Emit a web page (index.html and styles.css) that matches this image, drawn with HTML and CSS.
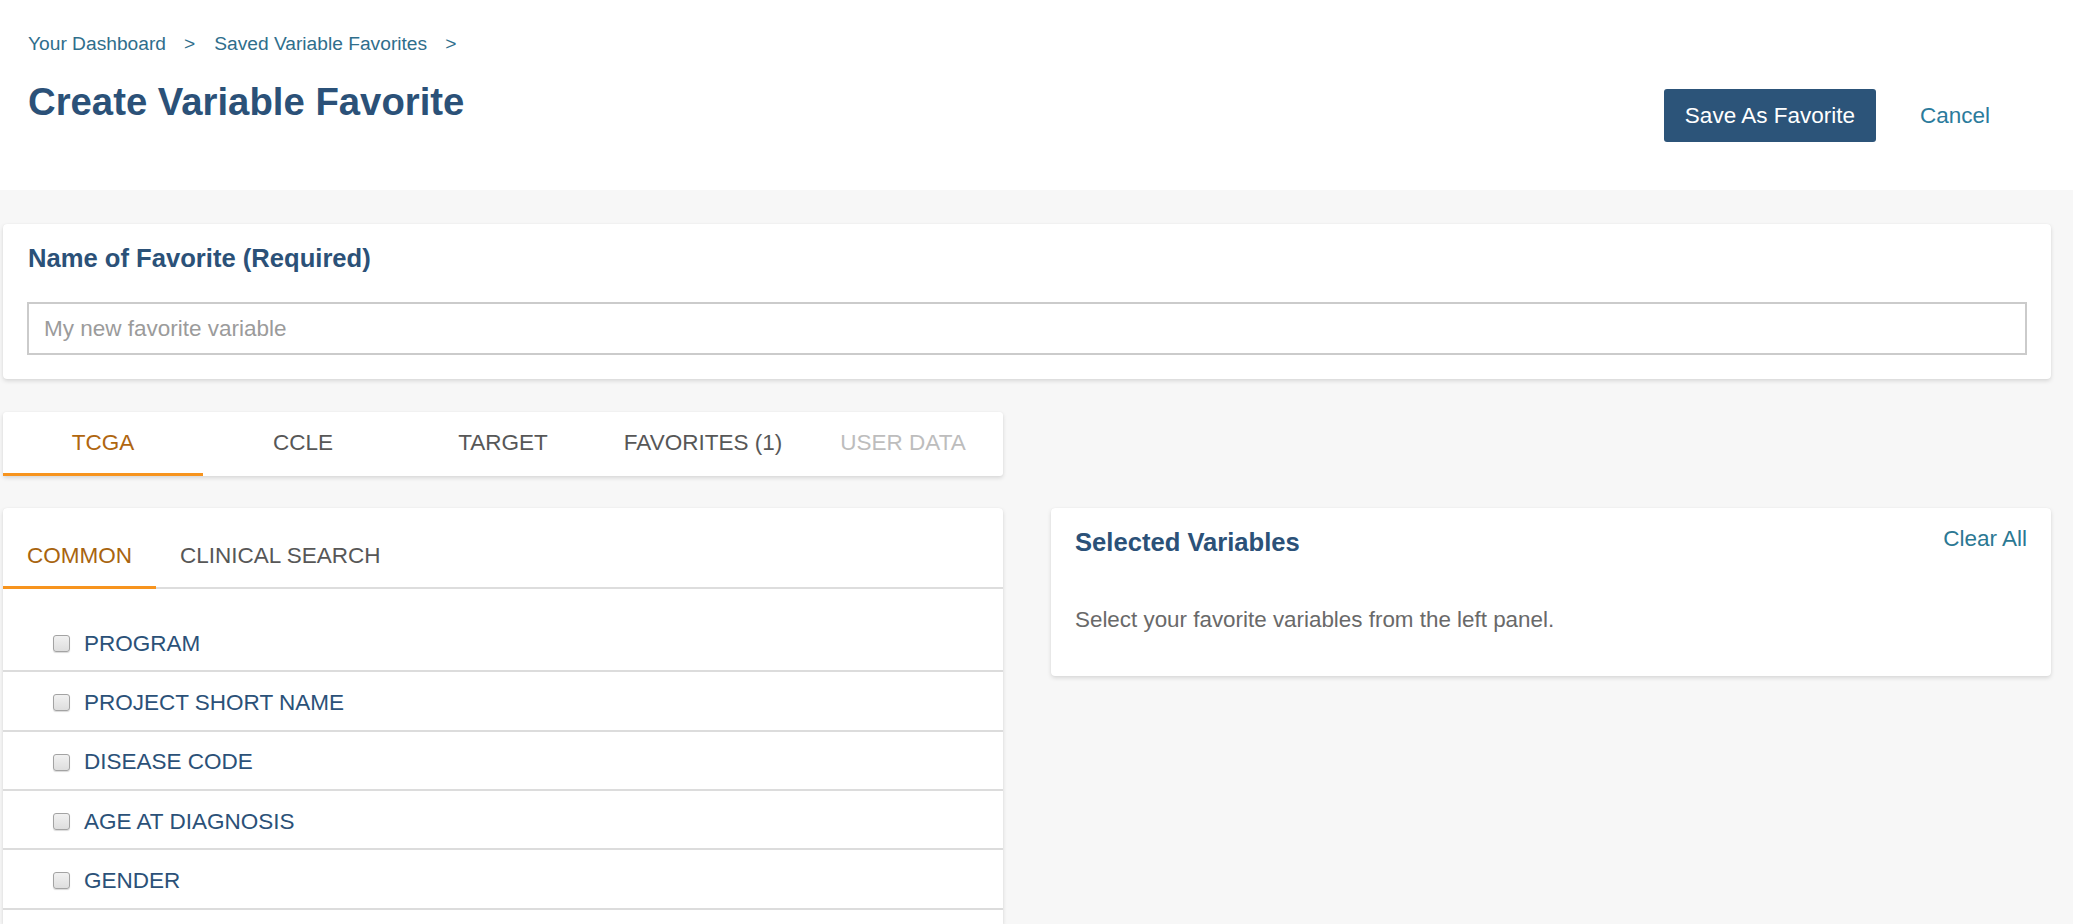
FILE: index.html
```html
<!DOCTYPE html>
<html lang="en">
<head>
<meta charset="utf-8">
<title>Create Variable Favorite</title>
<link rel="stylesheet" href="styles.css">
</head>
<body>
<header class="page-header">
  <div class="header-left">
    <nav class="breadcrumb">
      <a class="crumb" href="#">Your Dashboard</a><span class="crumb-sep">&gt;</span><a class="crumb" href="#">Saved Variable Favorites</a><span class="crumb-sep">&gt;</span>
    </nav>
    <h1 class="page-title">Create Variable Favorite</h1>
  </div>
  <div class="header-actions">
    <button class="btn-primary" type="button">Save As Favorite</button>
    <button class="btn-link" type="button">Cancel</button>
  </div>
</header>
<main class="page-body">
  <section class="card name-card">
    <h2 class="card-heading">Name of Favorite (Required)</h2>
    <input class="name-input" type="text" placeholder="My new favorite variable">
  </section>
  <div class="workspace">
    <div class="card program-tabs">
      <div class="program-tab active">TCGA</div>
      <div class="program-tab">CCLE</div>
      <div class="program-tab">TARGET</div>
      <div class="program-tab">FAVORITES (1)</div>
      <div class="program-tab disabled">USER DATA</div>
    </div>
    <section class="card variable-card">
      <div class="sub-tabs">
        <div class="sub-tab active">COMMON</div>
        <div class="sub-tab">CLINICAL SEARCH</div>
      </div>
      <ul class="variable-list">
        <li class="variable-row"><span class="checkbox"></span><span class="variable-name">PROGRAM</span></li>
        <li class="variable-row"><span class="checkbox"></span><span class="variable-name">PROJECT SHORT NAME</span></li>
        <li class="variable-row"><span class="checkbox"></span><span class="variable-name">DISEASE CODE</span></li>
        <li class="variable-row"><span class="checkbox"></span><span class="variable-name">AGE AT DIAGNOSIS</span></li>
        <li class="variable-row"><span class="checkbox"></span><span class="variable-name">GENDER</span></li>
      </ul>
    </section>
    <section class="card selected-card">
      <div class="selected-head">
        <h2 class="card-heading">Selected Variables</h2>
        <a class="clear-all" href="#">Clear All</a>
      </div>
      <p class="selected-empty">Select your favorite variables from the left panel.</p>
    </section>
  </div>
</main>
</body>
</html>
```
FILE: styles.css
```css
* { box-sizing: border-box; }

html, body {
  margin: 0;
  height: 100%;
}

body {
  font-family: "Liberation Sans", Arial, Helvetica, sans-serif;
  background: #f7f7f7;
  display: flex;
  flex-direction: column;
  overflow: hidden;
}

/* ---------- header ---------- */
.page-header {
  flex: 0 0 190px;
  background: #ffffff;
  display: flex;
  justify-content: space-between;
  align-items: flex-start;
  padding: 32px 61px 0 28px;
}

.breadcrumb {
  font-size: 19.2px;
  line-height: 24px;
  white-space: nowrap;
}

.crumb {
  color: #2f6e8c;
  text-decoration: none;
}

.crumb-sep {
  color: #2f6e8c;
  margin: 0 19px 0 18px;
}

.page-title {
  margin: 23px 0 0 0;
  font-size: 38.3px;
  line-height: 46px;
  font-weight: bold;
  color: #2b5178;
}

.header-actions {
  display: flex;
  align-items: center;
  margin-top: 57px;
}

.btn-primary {
  font-family: inherit;
  font-size: 22.5px;
  height: 53px;
  padding: 0 21px;
  background: #2c5479;
  color: #ffffff;
  border: none;
  border-radius: 3px;
}

.btn-link {
  font-family: inherit;
  font-size: 22.5px;
  height: 53px;
  padding: 0 22px;
  margin-left: 22px;
  background: transparent;
  border: none;
  color: #2b7b9c;
}

/* ---------- body ---------- */
.page-body {
  flex: 1;
  display: flex;
  flex-direction: column;
  padding: 34px 22px 0 3px;
  min-height: 0;
}

.card {
  background: #ffffff;
  border-radius: 4px;
  box-shadow: 0 2px 4px rgba(0, 0, 0, 0.13), 0 0 1px rgba(0, 0, 0, 0.08);
}

.card-heading {
  margin: 0;
  font-size: 25.6px;
  line-height: 30px;
  font-weight: bold;
  color: #2b5178;
}

.name-card {
  padding: 19px 24px 24px 24px;
}

.name-card .card-heading {
  padding-left: 1px;
}

.name-input {
  display: block;
  width: 100%;
  height: 53px;
  margin-top: 29px;
  border: 2px solid #cbcbcb;
  padding: 0 15px;
  font-family: inherit;
  font-size: 22.5px;
  color: #333;
  background: #fff;
  outline: none;
}

.name-input::placeholder {
  color: #9b9b9b;
}

.workspace {
  flex: 1;
  min-height: 0;
  margin-top: 33px;
  display: grid;
  grid-template-columns: 1000px 1000px;
  grid-template-rows: auto 1fr;
  column-gap: 48px;
}

/* ---------- program tabs ---------- */
.program-tabs {
  grid-column: 1;
  grid-row: 1;
  display: grid;
  grid-template-columns: repeat(5, 1fr);
  border-radius: 3px;
}

.program-tab {
  height: 64px;
  padding-top: 2px;
  border-bottom: 3px solid transparent;
  display: flex;
  align-items: center;
  justify-content: center;
  font-size: 22.5px;
  color: #575757;
  line-height: 1;
}

.program-tab.active {
  color: #b0660f;
  border-bottom-color: #f7941e;
}

.program-tab.disabled {
  color: #bdbdbd;
}

/* ---------- variable card ---------- */
.variable-card {
  grid-column: 1;
  grid-row: 2;
  margin-top: 32px;
  padding-top: 16px;
  border-radius: 4px 4px 0 0;
  overflow: hidden;
}

.sub-tabs {
  display: flex;
  border-bottom: 2px solid #dddddd;
}

.sub-tab {
  height: 65px;
  margin-bottom: -2px;
  padding: 1px 24px 0 24px;
  border-bottom: 3px solid transparent;
  display: flex;
  align-items: center;
  font-size: 22.5px;
  color: #575757;
}

.sub-tab.active {
  color: #a8640f;
  border-bottom-color: #f7941e;
}

.variable-list {
  list-style: none;
  margin: 0;
  padding: 24px 0 0 0;
}

.variable-row {
  height: 59.33px;
  padding: 4px 0 0 50px;
  border-bottom: 2px solid #dcdcdc;
  display: flex;
  align-items: center;
}

.checkbox {
  width: 17px;
  height: 17px;
  border: 1px solid #a3a3a3;
  border-radius: 3px;
  background: linear-gradient(#f1f1f1, #dedede);
  box-shadow: 0 1px 1px rgba(0, 0, 0, 0.15);
  margin-right: 14px;
  flex: 0 0 auto;
}

.variable-name {
  font-size: 22.5px;
  color: #2b5178;
}

/* ---------- selected card ---------- */
.selected-card {
  grid-column: 2;
  grid-row: 2;
  align-self: start;
  margin-top: 32px;
  padding: 19px 24px 41px 24px;
}

.selected-head {
  display: flex;
  justify-content: space-between;
  align-items: flex-start;
}

.clear-all {
  font-size: 22.5px;
  line-height: 24px;
  color: #2b7893;
  text-decoration: none;
}

.selected-empty {
  margin: 48px 0 0 0;
  font-size: 22.4px;
  line-height: 30px;
  color: #696969;
}
```
